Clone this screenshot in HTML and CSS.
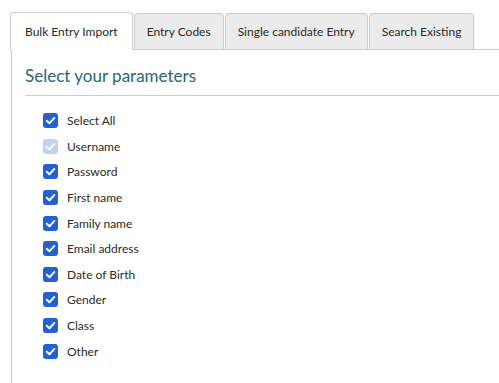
FILE: index.html
```html
<!DOCTYPE html>
<html>
<head>
<meta charset="utf-8">
<link rel="stylesheet" href="styles.css">
</head>
<body>
<div class="tabs">
  <div class="tab active">Bulk Entry Import</div>
  <div class="tab">Entry Codes</div>
  <div class="tab">Single candidate Entry</div>
  <div class="tab">Search Existing</div>
</div>
<div class="panel">
  <h2 class="title">Select your parameters</h2>
  <ul class="list">
    <li class="item"><span class="box"><svg viewBox="0 0 14 14"><path d="M3.5 7.2 L6 9.6 L10.6 4.6" /></svg></span>Select All</li>
    <li class="item"><span class="box disabled"><svg viewBox="0 0 14 14"><path d="M3.5 7.2 L6 9.6 L10.6 4.6" /></svg></span>Username</li>
    <li class="item"><span class="box"><svg viewBox="0 0 14 14"><path d="M3.5 7.2 L6 9.6 L10.6 4.6" /></svg></span>Password</li>
    <li class="item"><span class="box"><svg viewBox="0 0 14 14"><path d="M3.5 7.2 L6 9.6 L10.6 4.6" /></svg></span>First name</li>
    <li class="item"><span class="box"><svg viewBox="0 0 14 14"><path d="M3.5 7.2 L6 9.6 L10.6 4.6" /></svg></span>Family name</li>
    <li class="item"><span class="box"><svg viewBox="0 0 14 14"><path d="M3.5 7.2 L6 9.6 L10.6 4.6" /></svg></span>Email address</li>
    <li class="item"><span class="box"><svg viewBox="0 0 14 14"><path d="M3.5 7.2 L6 9.6 L10.6 4.6" /></svg></span>Date of Birth</li>
    <li class="item"><span class="box"><svg viewBox="0 0 14 14"><path d="M3.5 7.2 L6 9.6 L10.6 4.6" /></svg></span>Gender</li>
    <li class="item"><span class="box"><svg viewBox="0 0 14 14"><path d="M3.5 7.2 L6 9.6 L10.6 4.6" /></svg></span>Class</li>
    <li class="item"><span class="box"><svg viewBox="0 0 14 14"><path d="M3.5 7.2 L6 9.6 L10.6 4.6" /></svg></span>Other</li>
  </ul>
</div>
</body>
</html>
```
FILE: styles.css
```css
html, body {
  margin: 0;
  height: 100%;
  background: #fff;
}
body {
  font-family: Lato, "Open Sans", sans-serif;
  font-size: 12px;
  color: #2a2a2a;
  padding: 12px 0 0 10px;
  box-sizing: border-box;
  display: flex;
  flex-direction: column;
}
.tabs {
  display: flex;
  align-items: flex-end;
  border-bottom: 1px solid #ccc;
  height: 37px;
  flex-shrink: 0;
}
.tab {
  flex-shrink: 0;
  white-space: nowrap;
  height: 36px;
  box-sizing: border-box;
  padding: 0 12px;
  display: flex;
  align-items: center;
  background: #ebebeb;
  border: 1px solid #ccc;
  border-bottom: none;
  border-radius: 4px 4px 0 0;
  margin-right: 1px;
  color: #2a2a2a;
  font-size: 12px;
}
.tab.active {
  background: #fff;
  height: 38px;
  margin-bottom: -1px;
  padding: 0 14px;
}
.panel {
  flex: 1;
  border-left: 1px solid #ccc;
  margin-left: 1px;
  padding: 15px 0 0 13px;
}
.title {
  margin: 0;
  font-weight: normal;
  font-size: 17px;
  line-height: 22px;
  color: #2b6579;
  padding-bottom: 8px;
  border-bottom: 1px solid #ccc;
}
.list {
  list-style: none;
  margin: 0;
  padding: 12px 0 0 18px;
}
.item {
  display: flex;
  align-items: center;
  height: 25.6px;
}
.box {
  width: 15px;
  height: 15px;
  border-radius: 3px;
  background: #2461d0;
  margin-right: 9px;
  display: flex;
  flex-shrink: 0;
}
.box.disabled {
  background: #c3d3ee;
}
.box svg {
  width: 15px;
  height: 15px;
  fill: none;
  stroke: #fff;
  stroke-width: 1.8;
  stroke-linecap: round;
  stroke-linejoin: round;
}
```
